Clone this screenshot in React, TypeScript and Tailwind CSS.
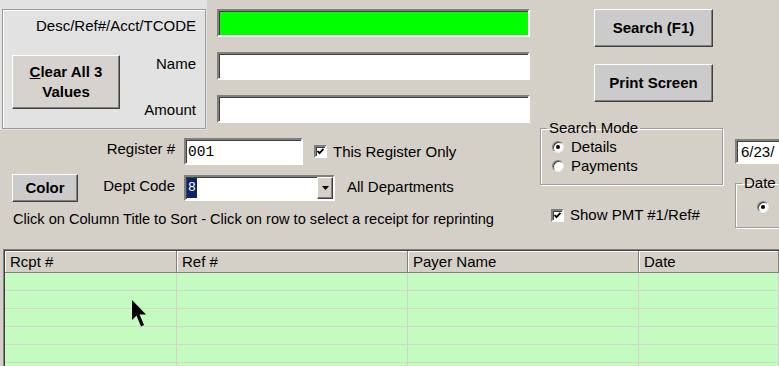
import React from "react";

const sunken =
  "border-2 border-t-[#808080] border-l-[#808080] border-b-white border-r-white shadow-[inset_1px_1px_0_#404040]";
const raised =
  "border border-t-white border-l-white border-r-[#404040] border-b-[#404040] shadow-[inset_-1px_-1px_0_#808080]";

function Checkbox() {
  return (
    <div className={`w-[13px] h-[13px] bg-white ${sunken} flex items-center justify-center shrink-0`}>
      <svg width="9" height="9" viewBox="0 0 9 9">
        <polyline points="1.5,4 3.5,6.2 7.5,1.8" fill="none" stroke="#000" strokeWidth="1.8" />
      </svg>
    </div>
  );
}

function Radio({ checked }: { checked?: boolean }) {
  return (
    <div className="w-[12px] h-[12px] rounded-full bg-white border border-t-[#808080] border-l-[#808080] border-b-[#e8e8e8] border-r-[#e8e8e8] shadow-[inset_1px_1px_0_#404040] flex items-center justify-center shrink-0">
      {checked && <div className="w-[4px] h-[4px] rounded-full bg-black" />}
    </div>
  );
}

function Group({
  label,
  className,
  children,
}: {
  label: string;
  className: string;
  children: React.ReactNode;
}) {
  return (
    <fieldset
      className={`border border-[#9c9c9c] shadow-[inset_1px_1px_0_#fff,1px_1px_0_#fff] ${className}`}
    >
      <legend className="ml-[6px] px-[2px] whitespace-nowrap leading-[18px]">{label}</legend>
      {children}
    </fieldset>
  );
}

const cols = [
  { title: "Rcpt #", w: "w-[172px]" },
  { title: "Ref #", w: "w-[231px]" },
  { title: "Payer Name", w: "w-[231px]" },
  { title: "Date", w: "flex-1" },
];

export default function App() {
  return (
    <div className="relative w-[779px] h-[366px] overflow-hidden bg-[#d4d0c8] text-black font-['Liberation_Sans',Arial,sans-serif] text-[15px] leading-[18px]">
      <div className="flex h-[249px]">
        {/* left column */}
        <div className="w-[540px] shrink-0">
          <div className="flex">
            <div className="w-[207px] h-[130px] bg-[#e2e2e2] pt-[9px] pl-[2px]">
              <div className="w-[204px] h-[120px] border border-[#9c9c9c] shadow-[inset_1px_1px_0_#fff] flex flex-col">
                <div className="pt-[7px] pr-[9px] text-right whitespace-nowrap">Desc/Ref#/Acct/TCODE</div>
                <div className="flex mt-[20px]">
                  <button
                    className={`ml-[9px] w-[108px] h-[54px] bg-[#d6d3ce] ${raised} font-bold text-[15px] leading-[20px] flex flex-col items-center justify-center`}
                  >
                    <span>
                      <span className="underline">C</span>lear All 3
                    </span>
                    <span>Values</span>
                  </button>
                  <div className="flex-1 pr-[9px] text-right">
                    <div>Name</div>
                    <div className="mt-[28px]">Amount</div>
                  </div>
                </div>
              </div>
            </div>
            <div className="ml-[10px] w-[313px] pt-[9px] flex flex-col gap-[15px]">
              <div className={`h-[28px] bg-[#00ff00] ${sunken}`} />
              <div className={`h-[28px] bg-white ${sunken}`} />
              <div className={`h-[28px] bg-white ${sunken}`} />
            </div>
          </div>

          <div className="mt-[8px] flex items-center h-[27px]">
            <div className="w-[175px] text-right -mt-[6px]">Register #</div>
            <div
              className={`ml-[9px] w-[119px] h-[27px] bg-white ${sunken} pl-[2px] flex items-center font-['Liberation_Mono',monospace] text-[14.5px]`}
            >
              001
            </div>
            <div className="ml-[11px]">
              <Checkbox />
            </div>
            <span className="ml-[6px]">This Register Only</span>
          </div>

          <div className="mt-[9px] flex items-center h-[28px]">
            <div className="w-[175px] flex items-center">
              <button className={`ml-[12px] w-[66px] h-[28px] bg-[#cbcbcb] ${raised} font-bold`}>Color</button>
              <div className="flex-1 text-right -mt-[4px]">Dept Code</div>
            </div>
            <div className={`ml-[9px] w-[151px] h-[26px] bg-white ${sunken} flex items-center pl-[1px]`}>
              <div className="w-[10px] h-[20px] bg-[#0a246a] text-white font-['Liberation_Mono',monospace] text-[13px] leading-[20px] text-center">
                8
              </div>
              <div className="flex-1" />
              <div className={`w-[16px] h-[22px] bg-[#d4d0c8] ${raised} flex items-center justify-center`}>
                <svg width="7" height="4" viewBox="0 0 7 4">
                  <polygon points="0,0 7,0 3.5,4" fill="#000" />
                </svg>
              </div>
            </div>
            <span className="ml-[12px] -mt-[3px]">All Departments</span>
          </div>

          <div className="mt-[8px] pl-[13px] whitespace-nowrap text-[14.6px]">
            Click on Column Title to Sort - Click on row to select a receipt for reprinting
          </div>
        </div>

        {/* middle column */}
        <div className="w-[195px] shrink-0">
          <button className={`ml-[54px] mt-[9px] w-[119px] h-[38px] bg-[#cbcbcb] ${raised} font-bold block`}>
            Search (F1)
          </button>
          <button className={`ml-[54px] mt-[17px] w-[119px] h-[38px] bg-[#cbcbcb] ${raised} font-bold block`}>
            Print Screen
          </button>
          <Group label="Search Mode" className="mt-[17px] w-[183px] h-[66px]">
            <div className="flex items-center h-[19px] ml-[11px]">
              <Radio checked />
              <span className="ml-[7px]">Details</span>
            </div>
            <div className="flex items-center h-[19px] ml-[11px]">
              <Radio />
              <span className="ml-[7px]">Payments</span>
            </div>
          </Group>
          <div className="mt-[21px] ml-[11px] flex items-center">
            <Checkbox />
            <span className="ml-[6px]">Show PMT #1/Ref#</span>
          </div>
        </div>

        {/* right column (clipped by the window edge) */}
        <div className="flex-1 pt-[139px]">
          <div className={`w-[80px] h-[25px] bg-white ${sunken} pl-[4px] flex items-center whitespace-nowrap`}>
            6/23/
          </div>
          <Group label="Date" className="mt-[10px] w-[80px] h-[54px]">
            <div className="flex items-center h-[19px] ml-[21px] mt-[5px] whitespace-nowrap">
              <Radio checked />
            </div>
          </Group>
        </div>
      </div>

      {/* results grid */}
      <div className="ml-[3px] border-t border-l border-[#808080]">
        <div className="border-t border-l border-[#404040]">
          <div className="flex h-[22px] bg-[#d4d0c8] border-b border-[#808080]">
            {cols.map((c) => (
              <div
                key={c.title}
                className={`${c.w} shrink-0 h-full border-r border-[#808080] shadow-[inset_1px_1px_0_#fff] pl-[5px] flex items-center`}
              >
                {c.title}
              </div>
            ))}
          </div>
          {[0, 1, 2, 3, 4, 5].map((r) => (
            <div key={r} className="flex h-[18px] bg-[#c3fbc1] border-b border-[#d3d8c9]">
              {cols.map((c) => (
                <div key={c.title} className={`${c.w} shrink-0 h-full border-r border-[#d3d3c9]`} />
              ))}
            </div>
          ))}
        </div>
      </div>

      {/* mouse pointer */}
      <svg className="absolute left-[132px] top-[300px]" width="16" height="28" viewBox="0 0 16 28">
        <polygon points="0,0 0,20 4.5,15.5 9,26.5 12,25 7.5,14.5 14,14.5" fill="#000" />
      </svg>
    </div>
  );
}
